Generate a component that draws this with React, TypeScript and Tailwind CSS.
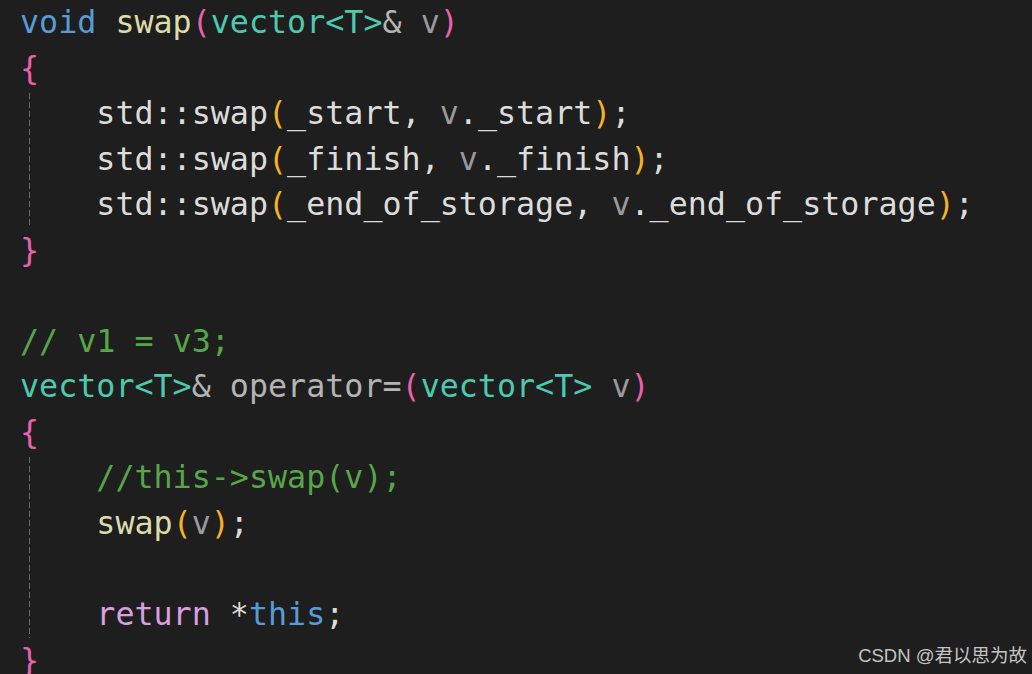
import React from 'react';

type Tok = [string, string];

const C = {
  kw: 'text-[#569cd6]',
  fn: 'text-[#dcdcaa]',
  ty: 'text-[#4ec9b0]',
  pk: 'text-[#e862b0]',
  gd: 'text-[#f5b326]',
  tx: 'text-[#dcdcdc]',
  pr: 'text-[#9a9a9a]',
  op: 'text-[#b4b4b4]',
  cm: 'text-[#57a64a]',
  ct: 'text-[#d8a0df]',
};

const Line = ({ toks }: { toks: Tok[] }) => (
  <div className="h-[45.56px] leading-[45.56px] whitespace-pre">
    {toks.length === 0 ? ' ' : toks.map(([t, c], i) => (
      <span key={i} className={c}>{t}</span>
    ))}
  </div>
);

// block body with the dashed indent guide
const Body = ({ lines }: { lines: Tok[][] }) => (
  <div className="bg-[repeating-linear-gradient(to_bottom,#6a6a6a_0_6px,transparent_6px_9px)] bg-[length:1px_100%] bg-no-repeat bg-[position:9px_2px]">
    {lines.map((l, i) => <Line key={i} toks={l} />)}
  </div>
);

export default function App() {
  return (
    <div className="relative w-[1032px] h-[674px] overflow-hidden bg-[#1e1e1e]">
      <div className="pl-[20px] mt-0 font-['DejaVu_Sans_Mono',monospace] text-[31.7px]">
        <Line toks={[['void', C.kw], [' ', C.tx], ['swap', C.fn], ['(', C.pk], ['vector<T>', C.ty], ['&', C.op], [' ', C.tx], ['v', C.pr], [')', C.pk]]} />
        <Line toks={[['{', C.pk]]} />
        <Body lines={[
          [['    std::swap', C.tx], ['(', C.gd], ['_start', C.tx], [', ', C.tx], ['v', C.pr], ['.', C.tx], ['_start', C.tx], [')', C.gd], [';', C.tx]],
          [['    std::swap', C.tx], ['(', C.gd], ['_finish', C.tx], [', ', C.tx], ['v', C.pr], ['.', C.tx], ['_finish', C.tx], [')', C.gd], [';', C.tx]],
          [['    std::swap', C.tx], ['(', C.gd], ['_end_of_storage', C.tx], [', ', C.tx], ['v', C.pr], ['.', C.tx], ['_end_of_storage', C.tx], [')', C.gd], [';', C.tx]],
        ]} />
        <Line toks={[['}', C.pk]]} />
        <Line toks={[]} />
        <Line toks={[['// v1 = v3;', C.cm]]} />
        <Line toks={[['vector<T>', C.ty], ['& operator=', C.op], ['(', C.pk], ['vector<T>', C.ty], [' ', C.tx], ['v', C.pr], [')', C.pk]]} />
        <Line toks={[['{', C.pk]]} />
        <Body lines={[
          [['    //this->swap(v);', C.cm]],
          [['    ', C.tx], ['swap', C.fn], ['(', C.gd], ['v', C.pr], [')', C.gd], [';', C.tx]],
          [],
          [['    ', C.tx], ['return', C.ct], [' ', C.tx], ['*', C.tx], ['this', C.kw], [';', C.tx]],
        ]} />
        <Line toks={[['}', C.pk]]} />
      </div>
      <div className="absolute right-[5px] bottom-[9px] text-[18.5px] leading-none text-[#c4c4c4] font-['Liberation_Sans','Noto_Sans_CJK_SC',sans-serif]">
        CSDN @君以思为故
      </div>
    </div>
  );
}
